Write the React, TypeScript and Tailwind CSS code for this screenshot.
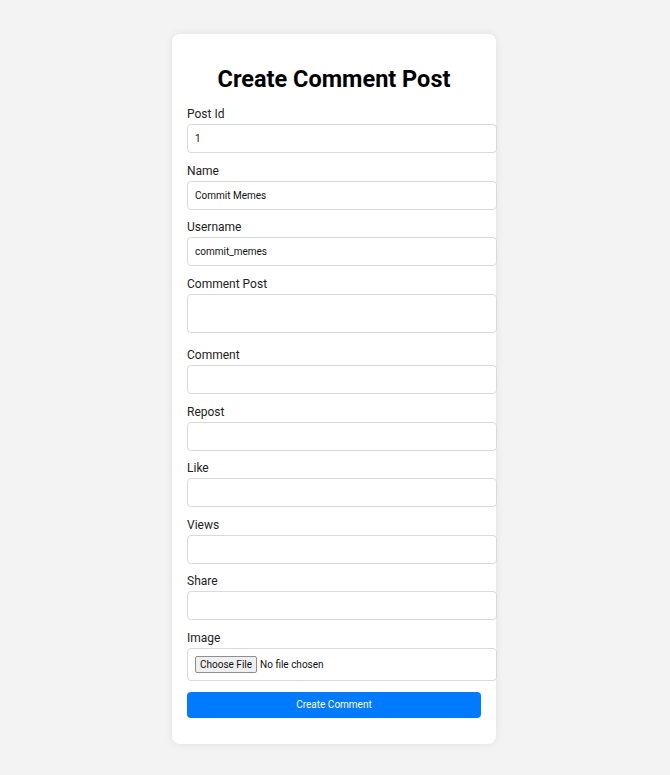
import React from 'react'

const fields = [
  { label: 'Post Id', value: '1' },
  { label: 'Name', value: 'Commit Memes' },
  { label: 'Username', value: 'commit_memes' },
  { label: 'Comment Post', value: '', area: true },
  { label: 'Comment', value: '' },
  { label: 'Repost', value: '' },
  { label: 'Like', value: '' },
  { label: 'Views', value: '' },
  { label: 'Share', value: '' },
]

export default function App() {
  return (
    <div className="min-h-[775px] bg-[#f3f3f3] pt-[34px] font-['Roboto',sans-serif]">
      <div className="ml-[172px] w-[324px] rounded-lg bg-white px-[15px] pt-[30px] pb-[26px] shadow-[0_0_8px_rgba(0,0,0,0.08)]">
        <h2 className="mb-[12px] text-center text-[23.5px] leading-[30px] font-bold text-black">Create Comment Post</h2>
        <form className="flex flex-col">
          {fields.map((f) => (
            <div key={f.label} className={f.area ? 'mb-[14.5px]' : 'mb-[9.5px]'}>
              <label className="mb-[2px] block text-[12px] leading-[16px] text-[#222]">{f.label}</label>
              {f.area ? (
                <textarea
                  defaultValue={f.value}
                  className="box-content block h-[37px] w-full resize-none rounded-[4px] border border-[#d9d9d9] px-[7px] text-[10px]"
                />
              ) : (
                <input
                  defaultValue={f.value}
                  className="box-content block h-[27px] w-full rounded-[4px] border border-[#d9d9d9] px-[7px] text-[10px] text-[#111] outline-none"
                />
              )}
            </div>
          ))}
          <div className="mb-[11px]">
            <label className="mb-[2px] block text-[12px] leading-[16px] text-[#222]">Image</label>
            <div className="box-content flex h-[31px] w-full items-center rounded-[4px] border border-[#d9d9d9] px-[7px] text-[10px] text-[#111]">
              <span className="rounded-[2px] border border-[#8f8f8f] bg-[#efefef] px-[4px] py-px leading-[13px] text-[#111]">Choose File</span>
              <span className="ml-[3px]">No file chosen</span>
            </div>
          </div>
          <button type="button" className="h-[26px] w-full rounded-[4px] bg-[#007bff] text-[10px] text-white">
            Create Comment
          </button>
        </form>
      </div>
    </div>
  )
}
